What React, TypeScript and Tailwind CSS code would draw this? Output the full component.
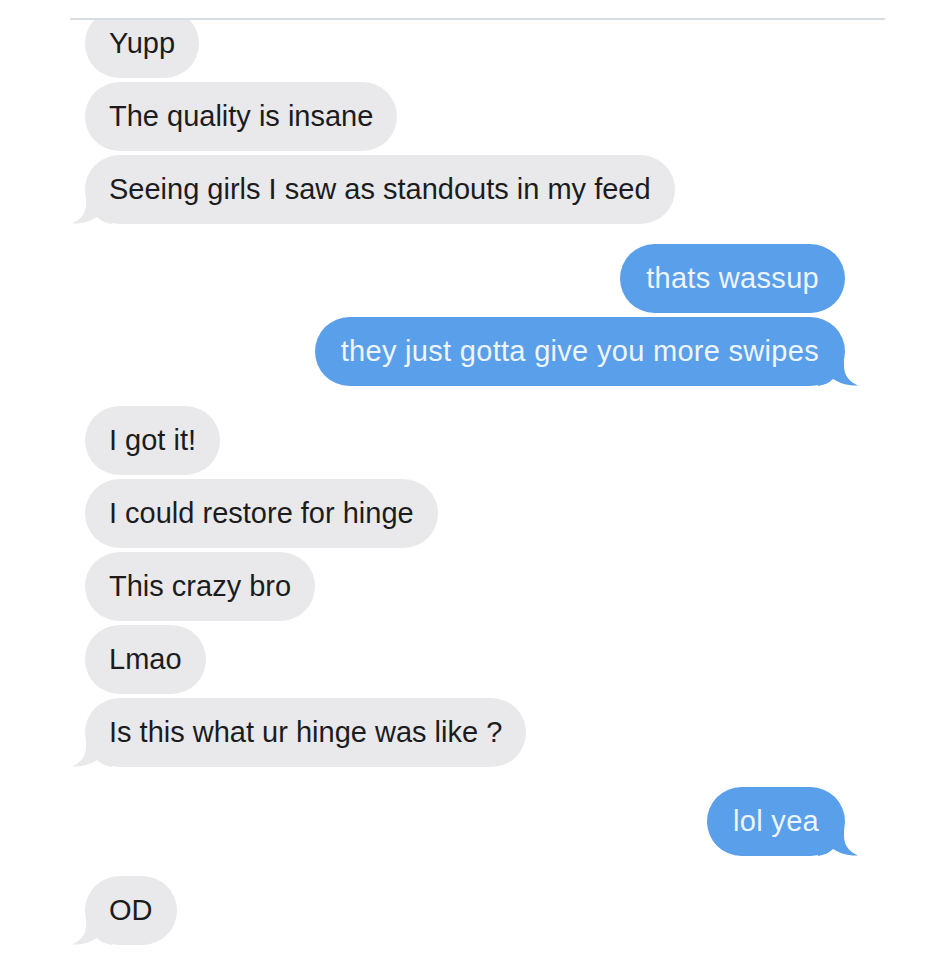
type Msg = { text: string; me?: boolean; tail?: boolean; gapBefore?: boolean };

const messages: Msg[] = [
  { text: "Yupp" },
  { text: "The quality is insane" },
  { text: "Seeing girls I saw as standouts in my feed", tail: true },
  { text: "thats wassup", me: true, gapBefore: true },
  { text: "they just gotta give you more swipes", me: true, tail: true },
  { text: "I got it!", gapBefore: true },
  { text: "I could restore for hinge" },
  { text: "This crazy bro" },
  { text: "Lmao" },
  { text: "Is this what ur hinge was like ?", tail: true },
  { text: "lol yea", me: true, tail: true, gapBefore: true },
  { text: "OD", tail: true, gapBefore: true },
];

const Tail = ({ me }: { me?: boolean }) => (
  <svg
    width="40"
    height="36"
    viewBox="0 0 40 36"
    className={
      me
        ? "absolute bottom-0 -right-[13px] -scale-x-100"
        : "absolute bottom-0 -left-[13px]"
    }
  >
    <path
      d="M14 0 L14 16 C14 26 8 32 0 35.5 C10 36 19 33 25 29 C29 33 34 35 40 36 L40 0 Z"
      fill={me ? "#5a9fea" : "#e9e9eb"}
    />
  </svg>
);

const Bubble = ({ m, first }: { m: Msg; first?: boolean }) => (
  <div
    className={`flex ${m.me ? "justify-end pr-[99px]" : "justify-start pl-[85px]"} ${
      m.gapBefore ? "mt-[20px]" : first ? "-mt-[11px]" : "mt-[4px]"
    }`}
  >
    <div
      className={`relative h-[69px] rounded-full flex items-center text-[29px] ${
        m.me
          ? "bg-[#5a9fea] text-[#eef5fd] px-[26px] tracking-[0.3px]"
          : "bg-[#e9e9eb] text-[#1c1c1e] px-[24px]"
      }`}
    >
      {m.tail && <Tail me={m.me} />}
      <span className="relative">{m.text}</span>
    </div>
  </div>
);

export default function App() {
  return (
    <div
      className="w-[944px] h-[978px] bg-white pt-[18px]"
      style={{ fontFamily: '"Liberation Sans", Arial, sans-serif' }}
    >
      <div className="ml-[70px] w-[815px] h-[2px] bg-[#d6dde3]" />
      <div className="overflow-hidden pb-4">
        {messages.map((m, i) => (
          <Bubble key={i} m={m} first={i === 0} />
        ))}
      </div>
    </div>
  );
}
